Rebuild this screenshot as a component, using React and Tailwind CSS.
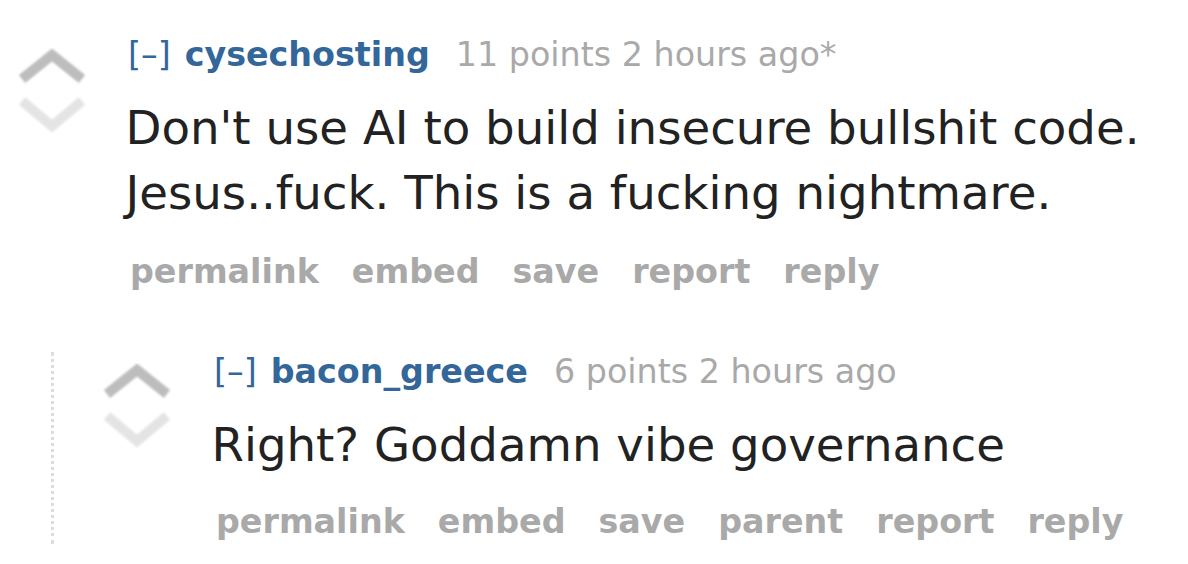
import React from "react";

function Arrows({ id, className }) {
  return (
    <svg width="68" height="86" viewBox="0 0 68 86" className={className}>
      <defs>
        <filter id={id} x="-10%" y="-10%" width="120%" height="120%">
          <feGaussianBlur stdDeviation="1.1" />
        </filter>
      </defs>
      <g filter={`url(#${id})`} fill="none" strokeWidth="10" strokeLinejoin="miter" strokeLinecap="butt">
        <polyline points="4,31 34,7 64,31" stroke="#bdbdbd" />
        <polyline points="4,53 34,78 64,53" stroke="#e4e4e4" />
      </g>
    </svg>
  );
}

function Entry({ user, meta, lines, buttons, btnTop }) {
  return (
    <div className="flex flex-col">
      <div className="flex items-baseline text-[33.33px] leading-[40px] whitespace-nowrap">
        <span className="text-[#336699] mr-[14px]">[–]</span>
        <span className="text-[#336699] font-bold mr-[26px]">{user}</span>
        <span className="text-[#a9a9a9]">{meta}</span>
      </div>
      <div className="mt-[21px] ml-[-2.5px] text-[46.67px] leading-[65px] text-[#222222]">
        {lines.map((l, i) => (
          <div key={i} className="whitespace-nowrap">{l}</div>
        ))}
      </div>
      <div className={`${btnTop} ml-[2px] flex gap-[33px] font-bold text-[33.33px] leading-[40px] text-[#a9a9a9] whitespace-nowrap`}>
        {buttons.map((b) => (
          <span key={b}>{b}</span>
        ))}
      </div>
    </div>
  );
}

export default function App() {
  return (
    <div className="w-[1188px] h-[564px] overflow-hidden bg-white pt-[34.5px] pl-[18px] font-['DejaVu_Sans',sans-serif]">
      <div className="flex items-start">
        <Arrows id="a1" className="mt-[13.5px] shrink-0" />
        <div className="ml-[42px]">
          <Entry
            user="cysechosting"
            meta="11 points 2 hours ago*"
            lines={[
              "Don't use AI to build insecure bullshit code.",
              "Jesus..fuck. This is a fucking nightmare.",
            ]}
            buttons={["permalink", "embed", "save", "report", "reply"]}
            btnTop="mt-[26px]"
          />
        </div>
      </div>
      <div className="ml-[33px] mt-[60px] border-l-[3px] border-dotted border-[#dddddd] pl-[49px] pb-[2px] flex items-start">
        <Arrows id="a2" className="mt-[11.5px] shrink-0" />
        <div className="ml-[43px]">
          <Entry
            user="bacon_greece"
            meta="6 points 2 hours ago"
            lines={["Right? Goddamn vibe governance"]}
            buttons={["permalink", "embed", "save", "parent", "report", "reply"]}
            btnTop="mt-[24px]"
          />
        </div>
      </div>
    </div>
  );
}
